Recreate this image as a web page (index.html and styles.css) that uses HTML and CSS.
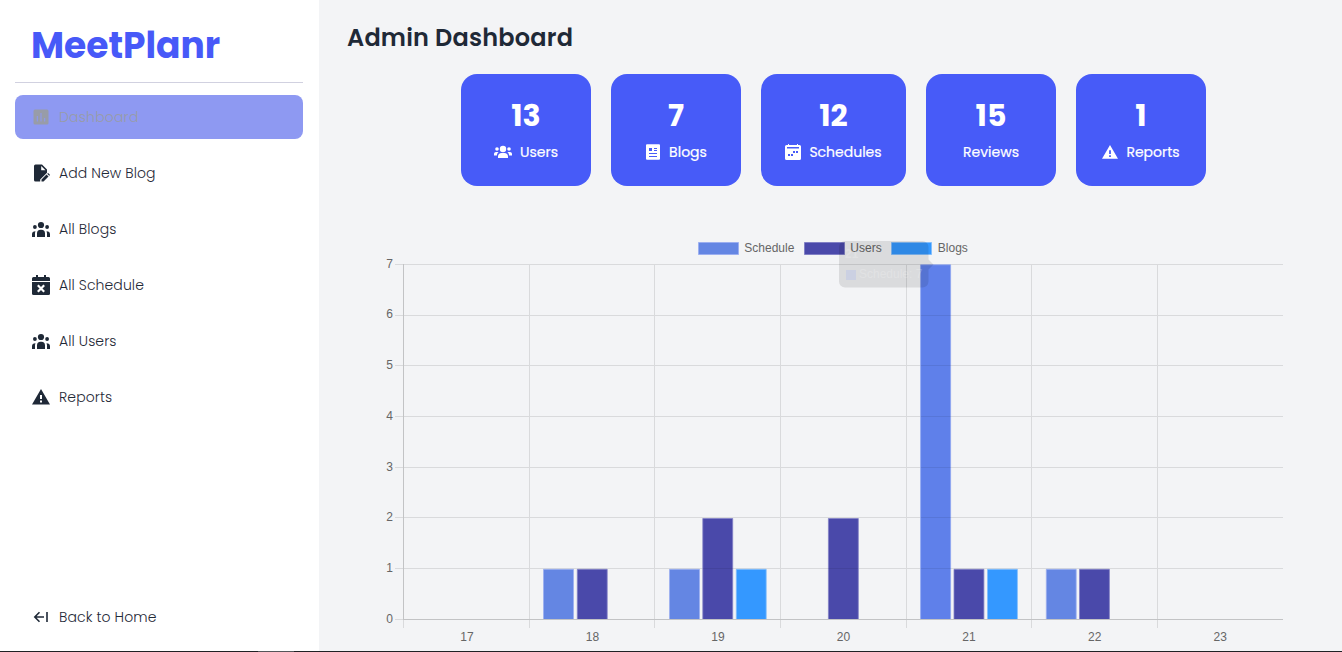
FILE: index.html
```html
<!DOCTYPE html>
<html lang="en">
<head>
<meta charset="utf-8">
<title>MeetPlanr</title>
<link rel="stylesheet" href="styles.css">
</head>
<body>
<svg class="defs" width="0" height="0">
  <symbol id="people" viewBox="0 0 18 16"><circle cx="9" cy="3.500" r="3.100"/><circle cx="2.900" cy="5.500" r="1.900"/><circle cx="15.100" cy="5.500" r="1.900"/><path d="M5 15.500v-3.600a3.600 3.600 0 0 1 3.600-3.600h.8a3.600 3.600 0 0 1 3.600 3.600v3.600zM0 15.500v-2.700c0-1.900 1.200-3 3.500-3.100-.4.900-.5 1.700-.5 2.600v3.200zM18 15.500v-2.700c0-1.900-1.200-3-3.500-3.100.4.900.5 1.700.5 2.600v3.200z"/></symbol>
  <symbol id="warning" viewBox="0 0 18 16"><path fill-rule="evenodd" d="M9 0l9 15.500H0zM8 6v4h2V6zm0 5.500v2h2v-2z"/></symbol>
</svg>
<div class="app">
  <aside class="sidebar">
    <div class="brand"><span>MeetPlanr</span></div>
    <nav class="nav">
      <a class="item active"><svg viewBox="0 0 18 18"><path fill-rule="evenodd" d="M3 1.500h12A1.500 1.500 0 0 1 16.500 3v12a1.500 1.500 0 0 1-1.500 1.500H3A1.500 1.500 0 0 1 1.500 15V3A1.500 1.500 0 0 1 3 1.500zM4.800 8v5.500h1V8zM8.500 5v8.500h1V5zM12.200 10v3.500h1V10z"/></svg><span>Dashboard</span></a>
      <a class="item"><svg viewBox="0 0 18 18"><path fill-rule="evenodd" d="M3.500.500H10l5 5v3.200L8.200 15.400v2.100H3.500A1.500 1.500 0 0 1 2 16V2A1.500 1.500 0 0 1 3.500.500zM9.200 2v4.300h4.300z"/><path d="M9.500 17.500v-2l5-5 2 2-5 5zM15.200 9.800l.9-.9 2 2-.9.900z"/></svg><span>Add New Blog</span></a>
      <a class="item"><svg viewBox="0 0 18 18"><use href="#people" y="1.500" width="18" height="16"/></svg><span>All Blogs</span></a>
      <a class="item"><svg class="tall" viewBox="0 0 18 20"><path d="M0 6V3.500A1.500 1.500 0 0 1 1.500 2H4V0h2v2h6V0h2v2h2.500A1.500 1.500 0 0 1 18 3.500V6z"/><path d="M0 7h18v11.500a1.500 1.500 0 0 1-1.500 1.500h-15A1.500 1.500 0 0 1 0 18.500z"/><path class="cross" d="M5.800 10.300l6.400 6.400m0-6.400l-6.400 6.400"/></svg><span>All Schedule</span></a>
      <a class="item"><svg viewBox="0 0 18 18"><use href="#people" y="1.500" width="18" height="16"/></svg><span>All Users</span></a>
      <a class="item"><svg viewBox="0 0 18 18"><use href="#warning" y="1" width="18" height="16"/></svg><span>Reports</span></a>
    </nav>
    <a class="item back"><svg viewBox="0 0 18 18"><path class="line" d="M12 9H3M7.500 4.300L2.800 9l4.700 4.700M15 4v10"/></svg><span>Back to Home</span></a>
  </aside>
  <main class="main">
    <h1><span>Admin Dashboard</span></h1>
    <section class="cards">
      <div class="card"><b>13</b><p><svg viewBox="0 0 18 16"><circle cx="9" cy="5" r="3.200"/><circle cx="3" cy="5" r="1.800"/><circle cx="15" cy="5" r="1.800"/><path d="M4 14v-1.500C4 10.500 5.500 9 7.500 9h3c2 0 3.500 1.500 3.500 3.500V14zM0 11.500V10c0-1.200.9-2 2-2h2.600C3.500 9 3 10 2.900 11.500zM18 11.500V10c0-1.200-.9-2-2-2h-2.600c1.100 1 1.600 2 1.700 3.500z"/></svg><span>Users</span></p></div>
      <div class="card"><b>7</b><p><svg viewBox="0 0 16 16"><path fill-rule="evenodd" d="M2 .3h12a1 1 0 0 1 1 1v13.400a1 1 0 0 1-1 1H2a1 1 0 0 1-1-1V1.300a1 1 0 0 1 1-1zM4 4v3h3V4zm5 0v1h3V4zm0 2v1h3V6zM4 9v1h8V9zm0 3v1h8v-1z"/></svg><span>Blogs</span></p></div>
      <div class="card wide"><b>12</b><p><svg viewBox="0 0 16 16"><path fill-rule="evenodd" d="M1.500 1H3V0h1v1h8V0h1v1h1.500A1.500 1.500 0 0 1 16 2.500v12a1.500 1.500 0 0 1-1.500 1.500h-13A1.500 1.500 0 0 1 0 14.500v-12A1.500 1.500 0 0 1 1.500 1zM2 3v1.600h12V3zM11 7v2h2V7zM8 7v2h2V7zM6 10v2h2v-2zM3 10v2h2v-2z"/></svg><span>Schedules</span></p></div>
      <div class="card"><b>15</b><p><span>Reviews</span></p></div>
      <div class="card"><b>1</b><p><svg viewBox="0 0 16 16"><use href="#warning" y="1" width="16" height="14.200"/></svg><span>Reports</span></p></div>
    </section>
    <svg class="chart" viewBox="369 230 930 421" width="930" height="421">
      <g class="legend">
        <path class="schedule" d="M698.500 242.500h40v12h-40z"/><text x="744.300" y="252">Schedule</text>
        <path class="users" d="M804.500 242.500h40v12h-40z"/><text x="850.300" y="252">Users</text>
        <path class="blogs" d="M891.500 242.500h40v12h-40z"/><text x="937.800" y="252">Blogs</text>
      </g>
      <path class="grid" d="M395 264.500h888M395 315.500h888M395 365.500h888M395 416.500h888M395 467.500h888M395 517.500h888M395 568.500h888M395 619.500h888M403.500 264v364M529.500 264v364M654.500 264v364M780.500 264v364M906.500 264v364M1031.500 264v364M1157.500 264v364"/>
      <g class="bars">
        <path class="schedule" d="M543.500 619V569.300h30v49.700M669.500 619V569.300h30v49.700M1046.300 619V569.300h29.900v49.700"/>
        <path class="schedule hover" d="M920.600 619V264.800h30v354.200"/>
        <path class="users" d="M577.300 619V569.300h29.900v49.700M702.800 619V518.500h29.900v100.500M828.400 619V518.500h29.900v100.500M954 619V569.300h29.900v49.700M1079.500 619V569.300h29.900v49.700"/>
        <path class="blogs" d="M736.300 619V569.300h29.900v49.700M987.500 619V569.300h29.900v49.700"/>
      </g>
      <path class="through" d="M703 568.500h30M828 568.500h30M921 315.500h30M921 365.500h30M921 416.500h30M921 467.500h30M921 517.500h30M921 568.500h30"/>
      <path class="axis" d="M403.500 264v356M403 619.500h880"/>
      <g class="ylabels"><text x="393" y="268">7</text><text x="393" y="318">6</text><text x="393" y="369">5</text><text x="393" y="420">4</text><text x="393" y="471">3</text><text x="393" y="521">2</text><text x="393" y="572">1</text><text x="393" y="623">0</text></g>
      <g class="xlabels"><text x="467" y="641">17</text><text x="592.500" y="641">18</text><text x="718" y="641">19</text><text x="843.500" y="641">20</text><text x="969" y="641">21</text><text x="1094.700" y="641">22</text><text x="1220.300" y="641">23</text></g>
      <g class="tooltip"><path d="M845 241h77.500a6 6 0 0 1 6 6v12.500l5 5-5 5V281.500a6 6 0 0 1-6 6H845a6 6 0 0 1-6-6V247a6 6 0 0 1 6-6z"/><text class="title" x="845" y="258">21</text><rect x="846" y="270" width="10" height="10"/><text x="859" y="278">Schedule: 7</text></g>
    </svg>
  </main>
</div>
<div class="strip"><i></i></div>
</body>
</html>
```
FILE: styles.css
```css
* { box-sizing: border-box; }
body { margin: 0; height: 652px; overflow: hidden; display: flex; flex-direction: column; background: #f3f4f6; color: #1f2937; font-family: Poppins, Inter, "Open Sans", sans-serif; }
.defs { position: absolute; }
.app { display: flex; height: 651px; }
.sidebar { width: 319px; padding: 0 16px 12px 15px; background: #fff; display: flex; flex-direction: column; }
.brand { height: 83px; padding: 19px 0 0 16px; border-bottom: 1px solid #d1d1e0; color: #4759f8; font-size: 36px; line-height: 54px; font-weight: 700; }
.nav { display: flex; flex-direction: column; gap: 12px; margin-top: 12px; }
.item { height: 44px; padding: 0 17px; display: flex; align-items: center; gap: 9px; border-radius: 8px; font-size: 14px; font-weight: 300; letter-spacing: .1px; }
.item svg { width: 18px; height: 18px; fill: currentColor; flex: none; overflow: visible; }
.item .tall { height: 20px; }
.item .cross { stroke: #fff; stroke-width: 2.2; }
.item .line { fill: none; stroke: currentColor; stroke-width: 1.6; }
.active { background: #8e99f2; color: #989ca8; letter-spacing: .2px; }
.back { margin-top: auto; }
.main { flex: 1; min-width: 0; display: flex; flex-direction: column; }
h1 { margin: 0; padding: 20px 0 0 28px; height: 74px; font-size: 24px; line-height: 36px; font-weight: 600; letter-spacing: .2px; }
.cards { display: flex; gap: 20px; padding-left: 142px; }
.card { width: 130px; height: 112px; padding-top: 23px; border-radius: 16px; background: #475bf8; color: #fff; text-align: center; }
.card.wide { width: 145px; }
.card b { display: block; font-size: 30px; line-height: 38px; font-weight: 700; }
.card p { margin: 6px 0 0; height: 22px; display: flex; align-items: center; justify-content: center; gap: 8px; font-size: 14px; }
.card span { -webkit-text-stroke: .2px #fff; }
.card svg { width: 18px; height: 16px; fill: #fff; flex: none; }
.card svg[viewBox="0 0 16 16"] { width: 16px; }
.chart { margin: 44px 0 0 50px; flex: none; font-family: "Liberation Sans", Arial, sans-serif; font-size: 12px; }
.chart text { fill: #666; }
.schedule { fill: #6486e3; stroke: #9caff0; }
.hover { fill: #5f80ea; stroke: #8ea6f0; }
.users { fill: #4a49aa; stroke: #8180c5; }
.blogs { fill: #3498ff; stroke: #83befc; }
.bars { stroke-width: .8; }
.grid { stroke: #d9dadc; fill: none; }
.through { stroke: #000; opacity: .07; }
.axis { stroke: #c2c3c5; fill: none; }
.ylabels { text-anchor: end; }
.xlabels { text-anchor: middle; }
.tooltip path { fill: #000; opacity: .1; }
.tooltip text { fill: #fff; opacity: .2; }
.tooltip .title { font-weight: 700; }
.tooltip rect { fill: #cbd0e2; }
.strip { height: 1px; background: #202125; }
.strip i { display: block; width: 36px; height: 1px; margin-left: 258px; background: #55565a; }
```
